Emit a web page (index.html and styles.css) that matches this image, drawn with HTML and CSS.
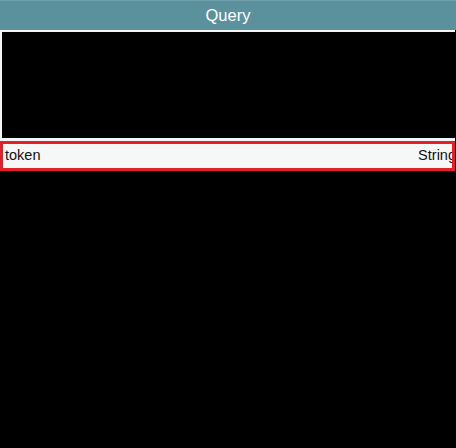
FILE: index.html
```html
<!DOCTYPE html>
<html lang="en">
<head>
<meta charset="utf-8">
<title>Query</title>
<link rel="stylesheet" href="styles.css">
</head>
<body>
<div class="app">
  <div class="header">Query</div>
  <div class="editor"></div>
  <div class="param-row">
    <span class="param-name">token</span>
    <span class="param-type">String</span>
  </div>
</div>
</body>
</html>
```

FILE: styles.css
```css
html, body {
  margin: 0;
  padding: 0;
  background: #000;
}

body {
  font-family: "Liberation Sans", Arial, Helvetica, sans-serif;
  width: 456px;
  height: 448px;
  overflow: hidden;
}

.app {
  width: 455px;
  display: flex;
  flex-direction: column;
}

.header {
  height: 29px;
  border-top: 1px solid #70a3ad;
  background: #5a919d;
  color: #ffffff;
  font-size: 16.5px;
  line-height: 29px;
  text-align: center;
  width: 456px;
}

.editor {
  height: 106px;
  background: #000;
  border-top: 2px solid #f4f6f6;
  border-left: 2px solid #f4f6f6;
  border-bottom: 3px solid #f4f6f6;
}

.param-row {
  height: 30px;
  box-sizing: border-box;
  background: #f6f7f7;
  outline: 3px solid #e3202a;
  outline-offset: -3px;
  display: flex;
  justify-content: space-between;
  align-items: center;
  padding: 0 0 3px 5px;
  font-size: 14.5px;
  color: #111;
  overflow: hidden;
}

.param-type {
  margin-right: -1px;
}
```
